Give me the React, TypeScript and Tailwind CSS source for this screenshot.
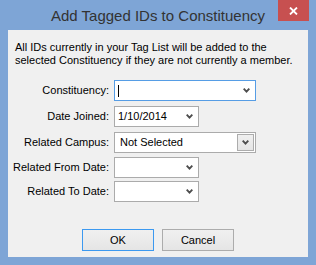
import React from "react";

type ComboProps = {
  width: string;
  value?: string;
  focused?: boolean;
  caret?: boolean;
  boxed?: boolean;
};

function Chevron() {
  return (
    <svg width="7" height="5" viewBox="0 0 7 5" className="block">
      <path d="M0.7 0.7 L3.5 3.6 L6.3 0.7" fill="none" stroke="#4d4d4d" strokeWidth="1.9" />
    </svg>
  );
}

function Combo({ width, value, focused, caret, boxed }: ComboProps) {
  return (
    <div
      className={`${width} h-[21px] bg-white border flex items-center ${
        focused ? "border-[#569de5]" : "border-[#ababab]"
      }`}
    >
      <div className="flex-1 flex items-center pl-[3px] h-full">
        {caret && <div className="w-[1px] h-[12px] bg-black ml-[0px]" />}
        {value && <span className={boxed ? "pl-[2px]" : ""}>{value}</span>}
      </div>
      {boxed ? (
        <div className="w-[17px] h-[17px] mr-[1px] border border-[#acacac] bg-gradient-to-b from-[#f0f0f0] to-[#e5e5e5] flex items-center justify-center">
          <Chevron />
        </div>
      ) : (
        <div className="w-[7px] mr-[5px] flex items-center">
          <Chevron />
        </div>
      )}
    </div>
  );
}

export default function App() {
  // form rows: label, field width, margin above
  const rows = [
    { label: "Constituency:", width: "w-[142px]", mt: "mt-[13px]", focused: true, caret: true },
    { label: "Date Joined:", width: "w-[85px]", mt: "mt-[5px]", value: "1/10/2014" },
    { label: "Related Campus:", width: "w-[142px]", mt: "mt-[5px]", value: "Not Selected", boxed: true },
    { label: "Related From Date:", width: "w-[85px]", mt: "mt-[4px]" },
    { label: "Related To Date:", width: "w-[85px]", mt: "mt-[3px]" },
  ];

  return (
    <div className="w-[316px] h-[265px] bg-[#7ea5d6] flex flex-col font-['Liberation_Sans',Arial,sans-serif] text-[11px] text-black">
      {/* Title bar */}
      <div className="relative h-[30px] flex items-center justify-center">
        <span className="text-[15px] text-[#333] leading-none">Add Tagged IDs to Constituency</span>
        <div className="absolute top-0 right-[7px] w-[31px] h-[21px] bg-[#c75050] flex items-center justify-center">
          <svg width="9" height="8" viewBox="0 0 9 8">
            <path d="M1 0.5 L8 7.5 M8 0.5 L1 7.5" stroke="#fff" strokeWidth="1.8" />
          </svg>
        </div>
      </div>

      {/* Client area */}
      <div className="mx-[8px] h-[227px] bg-[#f0f0f0] flex flex-col">
        <p className="pl-[7px] pt-[11px] leading-[13px]">
          All IDs currently in your Tag List will be added to the
          <br />
          selected Constituency if they are not currently a member.
        </p>

        {rows.map((r) => (
          <div key={r.label} className={`flex items-center h-[21px] ${r.mt}`}>
            <div className="w-[101px] text-right">{r.label}</div>
            <div className="ml-[5px]">
              <Combo width={r.width} value={r.value} focused={r.focused} caret={r.caret} boxed={r.boxed} />
            </div>
          </div>
        ))}

        {/* Buttons */}
        <div className="mt-[27px] flex justify-center gap-[8px]">
          <button className="w-[72px] h-[22px] border border-[#3c99f0] bg-gradient-to-b from-[#f0f0f0] to-[#e5e5e5] text-[11px]">
            OK
          </button>
          <button className="w-[72px] h-[22px] border border-[#acacac] bg-gradient-to-b from-[#f0f0f0] to-[#e5e5e5] text-[11px]">
            Cancel
          </button>
        </div>
      </div>
    </div>
  );
}
